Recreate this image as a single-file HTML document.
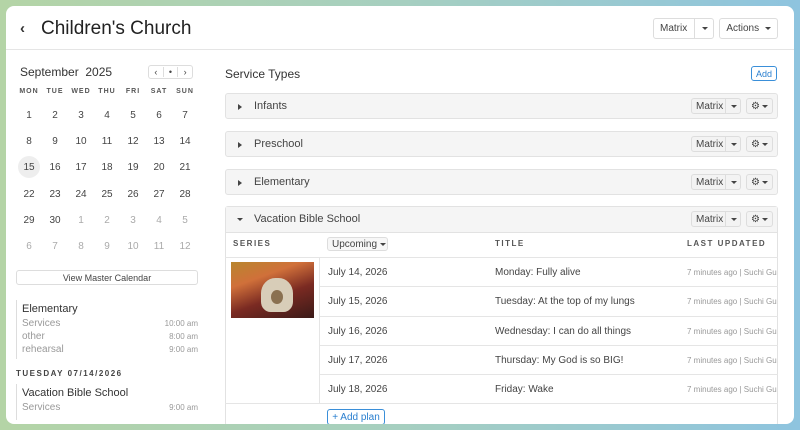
<!DOCTYPE html><html><head><style>
*{box-sizing:border-box;margin:0;padding:0}
body{width:800px;height:430px;overflow:hidden;font-family:"Liberation Sans",sans-serif;color:#333;background:linear-gradient(90deg,#b4d4a6 0%,#a6cfc0 50%,#8ec4df 100%);position:relative}
.card{position:absolute;left:6px;top:6px;width:788px;height:418px;background:#fff;border-radius:8px;overflow:hidden}
.a{position:absolute;white-space:nowrap}
.btn{position:absolute;border:1px solid #ddd;border-radius:3px;background:#fff;font-size:10px;color:#444;display:flex;align-items:center;justify-content:center}
.caret{display:inline-block;width:0;height:0;border-left:3px solid transparent;border-right:3px solid transparent;border-top:3px solid #444}
.day{position:absolute;width:22px;text-align:center;font-size:10px;color:#444}
.dh{position:absolute;width:26px;text-align:center;font-size:7px;letter-spacing:1px;color:#555;font-weight:bold}
.ph{position:absolute;left:219px;width:553px;height:26px;background:#f5f5f5;border:1px solid #e2e2e2;border-radius:3px}
.ph .t{position:absolute;left:28px;top:6px;font-size:11px;color:#444}
.tri{position:absolute;left:12px;top:10px;width:0;height:0;border-top:3px solid transparent;border-bottom:3px solid transparent;border-left:4px solid #444}
.row{position:absolute;left:313px;width:459px;border-top:1px solid #e5e5e5;font-size:10px;color:#444}
.sm{font-size:8px;color:#999}
.ev{font-size:10px;color:#999}
</style></head><body><div class="card">
<div class="a" style="left:14px;top:14px;font-size:15px;color:#333;font-weight:bold">‹</div>
<div class="a" style="left:35px;top:12px;font-size:19px;color:#222">Children's Church</div>
<div class="btn" style="left:647px;top:12px;width:61px;height:21px;justify-content:flex-start;padding-left:6px">Matrix<span style="position:absolute;left:40px;top:0;bottom:0;border-left:1px solid #ddd;width:20px;display:flex;align-items:center;justify-content:center"><span class="caret"></span></span></div>
<div class="btn" style="left:713px;top:12px;width:59px;height:21px">Actions&nbsp;&nbsp;<span class="caret"></span></div>
<div class="a" style="left:0;top:43px;width:788px;border-top:1px solid #e5e5e5"></div>

<div class="a" style="left:14px;top:59px;font-size:12px;color:#333">September&nbsp; 2025</div>
<div class="btn" style="left:142px;top:59px;width:45px;height:14px;font-size:9px"><span style="flex:1;text-align:center">‹</span><span style="flex:1;text-align:center;border-left:1px solid #ddd;border-right:1px solid #ddd">•</span><span style="flex:1;text-align:center">›</span></div>
<div class="dh" style="left:10px;top:82px">MON</div><div class="dh" style="left:36px;top:82px">TUE</div><div class="dh" style="left:62px;top:82px">WED</div><div class="dh" style="left:88px;top:82px">THU</div><div class="dh" style="left:114px;top:82px">FRI</div><div class="dh" style="left:140px;top:82px">SAT</div><div class="dh" style="left:166px;top:82px">SUN</div>
<div class="a" style="left:12px;top:150px;width:22px;height:22px;border-radius:50%;background:#eee"></div>
<div id="cal"></div>
<div class="btn" style="left:10px;top:264px;width:182px;height:15px;font-size:9px">View Master Calendar</div>
<div class="a" style="left:10px;top:294px;height:59px;border-left:1px solid #ddd"></div>
<div class="a" style="left:16px;top:297px;font-size:11px;color:#333">Elementary</div>
<div class="a ev" style="left:16px;top:312px">Services</div><div class="a sm" style="right:596px;top:313px">10:00 am</div>
<div class="a ev" style="left:16px;top:325px">other</div><div class="a sm" style="right:596px;top:326px">8:00 am</div>
<div class="a ev" style="left:16px;top:338px">rehearsal</div><div class="a sm" style="right:596px;top:339px">9:00 am</div>
<div class="a" style="left:10px;top:363px;font-size:8px;letter-spacing:1.5px;font-weight:bold;color:#444">TUESDAY 07/14/2026</div>
<div class="a" style="left:10px;top:378px;height:36px;border-left:1px solid #ddd"></div>
<div class="a" style="left:16px;top:381px;font-size:11px;color:#333">Vacation Bible School</div>
<div class="a ev" style="left:16px;top:396px">Services</div><div class="a sm" style="right:596px;top:397px">9:00 am</div>

<div class="a" style="left:219px;top:61px;font-size:12px;color:#333">Service Types</div>
<div class="btn" style="left:745px;top:60px;width:26px;height:15px;border-color:#3a8fd9;color:#2a7fcf;font-size:9px">Add</div>

<div class="ph" style="top:87px"><div class="tri"></div><div class="t">Infants</div></div>
<div class="ph" style="top:125px"><div class="tri"></div><div class="t">Preschool</div></div>
<div class="ph" style="top:163px"><div class="tri"></div><div class="t">Elementary</div></div>
<div class="ph" style="top:200px;height:220px;background:#fff"><div style="position:absolute;left:0;top:0;right:0;height:26px;background:#f5f5f5;border-bottom:1px solid #e2e2e2"></div><div style="position:absolute;left:11px;top:11px" class="caret"></div><div class="t">Vacation Bible School</div></div>
<div id="btns"></div>

<div class="a" style="left:227px;top:233px;font-size:8px;letter-spacing:1.5px;font-weight:bold;color:#555">SERIES</div>
<div class="btn" style="left:321px;top:231px;width:61px;height:14px;background:#f7f7f7;justify-content:flex-start;padding-left:4px">Upcoming&nbsp;<span class="caret"></span></div>
<div class="a" style="left:489px;top:233px;font-size:8px;letter-spacing:1.5px;font-weight:bold;color:#555">TITLE</div>
<div class="a" style="left:681px;top:233px;font-size:8px;letter-spacing:1.5px;font-weight:bold;color:#555">LAST UPDATED</div>
<div class="a" style="left:219px;top:251px;width:553px;border-top:1px solid #e5e5e5"></div>
<div class="a" style="left:313px;top:251px;height:146px;border-left:1px solid #e5e5e5"></div>
<div class="a" style="left:225px;top:256px;width:83px;height:56px;background:linear-gradient(160deg,#b8862e 0%,#d0703a 30%,#7a2a22 60%,#3a1a18 100%)"><div style="position:absolute;left:30px;top:16px;width:32px;height:34px;border-radius:45% 45% 30% 30%;background:#d8cdb8"></div><div style="position:absolute;left:40px;top:28px;width:12px;height:14px;border-radius:50%;background:#8a7050"></div></div>
<div id="rows"></div>
<div class="a" style="left:219px;top:397px;width:553px;border-top:1px solid #e5e5e5"></div>
<div class="btn" style="left:321px;top:403px;width:58px;height:16px;border-color:#3a8fd9;color:#2a7fcf;font-size:10px">+ Add plan</div>
</div>
<script>
var c='',d=[[1,2,3,4,5,6,7],[8,9,10,11,12,13,14],[15,16,17,18,19,20,21],[22,23,24,25,26,27,28],[29,30,1,2,3,4,5],[6,7,8,9,10,11,12]],ys=[104,130,156,183,209,235];
d.forEach(function(r,i){r.forEach(function(n,j){var g=(i==4&&j>1)||i==5;c+='<div class="day" style="left:'+(12+26*j)+'px;top:'+ys[i]+'px;color:'+(g?'#aaa':'#444')+'">'+n+'</div>'})});
document.getElementById('cal').innerHTML=c;
var b='';[87,125,163,200].forEach(function(t){b+='<div class="btn" style="left:685px;top:'+(t+5)+'px;width:50px;height:16px;background:#f3f3f3;justify-content:flex-start;padding-left:4px">Matrix<span style="position:absolute;left:33px;top:0;bottom:0;border-left:1px solid #ddd;width:16px;display:flex;align-items:center;justify-content:center"><span class="caret"></span></span></div><div class="btn" style="left:740px;top:'+(t+5)+'px;width:27px;height:16px;background:#f3f3f3">⚙<span class="caret" style="margin-left:2px"></span></div>'});
document.getElementById('btns').innerHTML=b;
var rs=[['July 14, 2026','Monday: Fully alive'],['July 15, 2026','Tuesday: At the top of my lungs'],['July 16, 2026','Wednesday: I can do all things'],['July 17, 2026','Thursday: My God is so BIG!'],['July 18, 2026','Friday: Wake']],h='';
rs.forEach(function(r,i){var t=251+i*29.3;h+='<div class="row" style="top:'+t+'px;height:29px"><span class="a" style="left:9px;top:9px">'+r[0]+'</span><span class="a" style="left:176px;top:9px">'+r[1]+'</span><span class="a sm" style="left:368px;top:10px">7 minutes ago | Suchi Gu</span></div>'});
document.getElementById('rows').innerHTML=h;
</script></body></html>
